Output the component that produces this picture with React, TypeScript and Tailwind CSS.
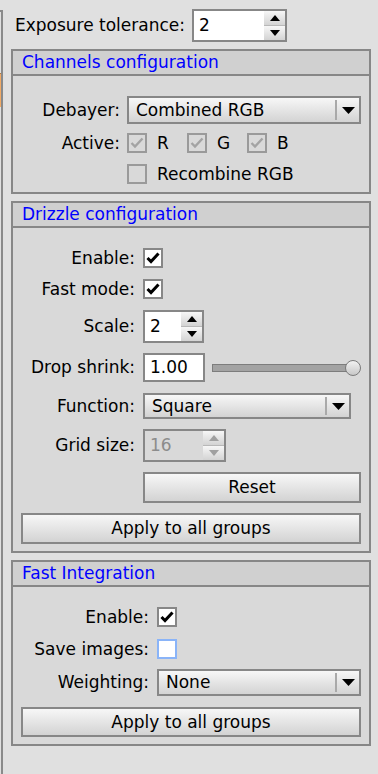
import type { ReactNode } from 'react';

const grad = 'bg-gradient-to-b from-[#f7f7f7] to-[#d3d3d3]';

function Tri({ up, color = '#000', w = 10, h = 6 }: { up?: boolean; color?: string; w?: number; h?: number }) {
  return (
    <svg width={w} height={h} viewBox={`0 0 ${w} ${h}`}>
      <polygon points={up ? `0,${h} ${w / 2},0 ${w},${h}` : `0,0 ${w},0 ${w / 2},${h}`} fill={color} />
    </svg>
  );
}

function Spin({ value, className, disabled }: { value: string; className: string; disabled?: boolean }) {
  const c = disabled ? '#a0a0a0' : '#000';
  return (
    <div className={`flex border-2 border-[#878787] ${className}`}>
      <div className={`flex flex-1 items-center pl-[5px] ${disabled ? 'bg-[#d9d9d9] text-[#8c8c8c]' : 'bg-white'}`}>
        {value}
      </div>
      <div className="flex w-[21px] flex-col">
        <div className={`flex flex-1 items-center justify-center ${grad}`}>
          <Tri up color={c} />
        </div>
        <div className={`flex flex-1 items-center justify-center border-t border-[#b8b8b8] ${grad}`}>
          <Tri color={c} />
        </div>
      </div>
    </div>
  );
}

function Choice({ value, className }: { value: string; className: string }) {
  return (
    <div className={`flex border-2 border-[#878787] ${grad} ${className}`}>
      <div className="flex flex-1 items-center pl-[7px]">{value}</div>
      <div className="my-[2px] w-[2px] bg-[#a9a9a9]" />
      <div className="flex w-[22px] items-center justify-center">
        <Tri w={13} h={7} />
      </div>
    </div>
  );
}

function Check({ checked, disabled, focus }: { checked?: boolean; disabled?: boolean; focus?: boolean }) {
  const box = focus
    ? 'border-[#8ab4f8] bg-white'
    : disabled
      ? 'border-[#9a9a9a] bg-[#d9d9d9]'
      : 'border-[#878787] bg-white';
  return (
    <div className={`flex h-[20px] w-[20px] flex-none items-center justify-center border-2 ${box}`}>
      {checked && (
        <svg width="14" height="12" viewBox="0 0 14 12">
          <polyline
            points="1.5,6 5,9.5 12.5,1.5"
            fill="none"
            stroke={disabled ? '#a3a3a3' : '#000'}
            strokeWidth={disabled ? 2.4 : 3}
          />
        </svg>
      )}
    </div>
  );
}

function Btn({ label, className }: { label: string; className: string }) {
  return (
    <div className={`flex items-center justify-center border-2 border-[#878787] ${grad} ${className}`}>{label}</div>
  );
}

function Row({ label, lw, className, children }: { label: string; lw: string; className: string; children: ReactNode }) {
  return (
    <div className={`flex items-center ${className}`}>
      <div className={`flex-none text-right ${lw}`}>{label}</div>
      {children}
    </div>
  );
}

function Group({ title, children }: { title: string; children: ReactNode }) {
  return (
    <div className="border-2 border-[#878787] bg-[#d9d9d9]">
      <div className="flex h-[25px] items-center border-b-2 border-[#878787] bg-[#d0d0d0] px-[9px] text-[#0000ff]">
        {title}
      </div>
      {children}
    </div>
  );
}

export default function App() {
  return (
    <div className="flex min-h-[774px] w-[378px] bg-[#e0e0e0] font-['DejaVu_Sans',sans-serif] text-[17px] leading-none text-black">
      {/* neighbouring panel edge */}
      <div className="mt-[10px] w-[3px] flex-none border-t-2 border-r-2 border-[#8a8a8a]">
        <div className="mt-[61px] h-[34px] bg-[#f2ab66]">
          <div className="mt-[13px] h-px bg-[#b07a40]" />
        </div>
      </div>

      <div className="flex-1 pr-[7px] pl-[8px]">
        <div className="mt-[9px] flex h-[33px] items-center">
          <div className="w-[174px] text-right">Exposure tolerance:</div>
          <Spin value="2" className="ml-[7px] h-[33px] w-[95px]" />
        </div>

        <div className="mt-[7px]">
          <Group title="Channels configuration">
            <div className="pt-[20px] pr-[8px] pb-[8px]">
              <Row label="Debayer:" lw="w-[107px]" className="h-[28px]">
                <Choice value="Combined RGB" className="ml-[7px] h-[28px] flex-1" />
              </Row>
              <Row label="Active:" lw="w-[107px]" className="mt-[9px] h-[20px]">
                <div className="ml-[7px] flex">
                  {['R', 'G', 'B'].map((c) => (
                    <div key={c} className="flex w-[60px] items-center gap-[10px]">
                      <Check checked disabled />
                      <span>{c}</span>
                    </div>
                  ))}
                </div>
              </Row>
              <Row label="" lw="w-[107px]" className="mt-[11px] h-[20px]">
                <div className="ml-[7px] flex items-center gap-[10px]">
                  <Check disabled />
                  <span>Recombine RGB</span>
                </div>
              </Row>
            </div>
          </Group>
        </div>

        <div className="mt-[7px]">
          <Group title="Drizzle configuration">
            <div className="pt-[20px] pr-[8px] pb-[7px]">
              <Row label="Enable:" lw="w-[122px]" className="h-[20px]">
                <div className="ml-[8px]">
                  <Check checked />
                </div>
              </Row>
              <Row label="Fast mode:" lw="w-[122px]" className="mt-[11px] h-[20px]">
                <div className="ml-[8px]">
                  <Check checked />
                </div>
              </Row>
              <Row label="Scale:" lw="w-[122px]" className="mt-[11px] h-[33px]">
                <Spin value="2" className="ml-[8px] h-[33px] w-[61px]" />
              </Row>
              <Row label="Drop shrink:" lw="w-[122px]" className="mt-[10px] h-[29px]">
                <div className="ml-[8px] flex h-[29px] w-[62px] items-center border-2 border-[#878787] bg-white pl-[5px]">
                  1.00
                </div>
                <div className="relative ml-[7px] flex h-[16px] flex-1 items-center">
                  <div className="h-[8px] w-[143px] border border-[#7d7d7d] bg-[#a3a3a3]" />
                  <div className="absolute top-0 right-0 h-[16px] w-[16px] rounded-full border border-[#7a7a7a] bg-gradient-to-b from-[#f2f2f2] to-[#c8c8c8]" />
                </div>
              </Row>
              <Row label="Function:" lw="w-[122px]" className="mt-[11px] h-[26px]">
                <Choice value="Square" className="ml-[8px] h-[26px] w-[208px]" />
              </Row>
              <Row label="Grid size:" lw="w-[122px]" className="mt-[10px] h-[33px]">
                <Spin value="16" disabled className="ml-[8px] h-[33px] w-[83px]" />
              </Row>
              <Row label="" lw="w-[122px]" className="mt-[10px] h-[31px]">
                <Btn label="Reset" className="ml-[8px] h-[31px] flex-1" />
              </Row>
              <div className="mt-[10px] pl-[8px]">
                <Btn label="Apply to all groups" className="h-[31px]" />
              </div>
            </div>
          </Group>
        </div>

        <div className="mt-[7px]">
          <Group title="Fast Integration">
            <div className="pt-[20px] pr-[8px] pb-[7px]">
              <Row label="Enable:" lw="w-[136px]" className="h-[20px]">
                <div className="ml-[8px]">
                  <Check checked />
                </div>
              </Row>
              <Row label="Save images:" lw="w-[136px]" className="mt-[12px] h-[20px]">
                <div className="ml-[8px]">
                  <Check focus />
                </div>
              </Row>
              <Row label="Weighting:" lw="w-[136px]" className="mt-[10px] h-[27px]">
                <Choice value="None" className="ml-[8px] h-[27px] flex-1" />
              </Row>
              <div className="mt-[11px] pl-[8px]">
                <Btn label="Apply to all groups" className="h-[30px]" />
              </div>
            </div>
          </Group>
        </div>
      </div>
    </div>
  );
}
